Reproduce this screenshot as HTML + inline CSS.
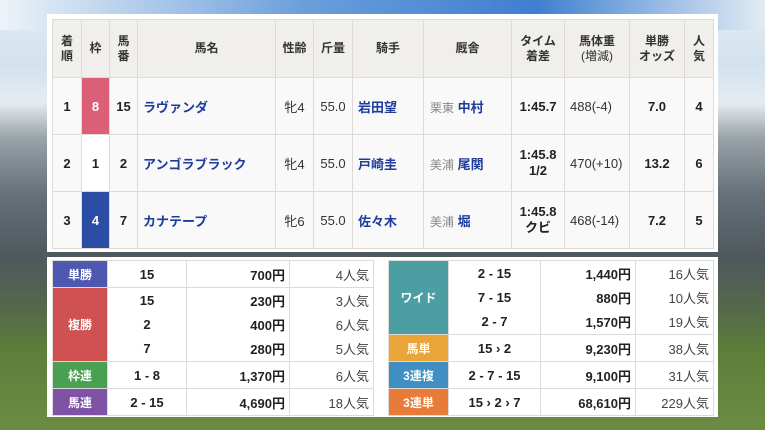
<!DOCTYPE html>
<html><head><meta charset="utf-8"><style>
*{margin:0;padding:0;box-sizing:border-box}
body{width:765px;height:430px;overflow:hidden;position:relative;font-family:"Liberation Sans","Noto Sans CJK JP",sans-serif;
background:linear-gradient(180deg,#e4edf4 0%,#d3e2ee 15%,#e4ecf1 24%,#9aa3a8 32%,#66717a 45%,#4e585d 60%,#55694a 72%,#5d7f3a 82%,#6c8c44 100%);}
.sky{position:absolute;left:0;top:0;width:765px;height:30px;background:linear-gradient(90deg,#edf3f8,#6a9edb 40%,#3f7fd0 70%,#e2ecf4)}
.panel{position:absolute;background:#fff}
table{border-collapse:collapse;position:absolute;table-layout:fixed}
td{border:1px solid #dedbd6;text-align:center;font-size:13px;color:#222;padding:0}
.h td{background:#f1efeb;font-weight:bold;font-size:12px;line-height:15px;color:#333}
.r td{background:#f9f9f9;font-weight:bold}
.b{color:#1d3c9c;font-weight:bold;text-align:left;padding-left:5px;font-size:13px}
.n{font-weight:normal!important;color:#333}
.g{color:#888;font-weight:normal;font-size:12px}
.p td{background:#fff;font-size:13px;font-weight:bold;color:#222}
.lab{color:#fff!important;font-size:12px!important}
.rt{text-align:right;padding-right:4px}
.pop{text-align:right;padding-right:4px;font-weight:normal!important;color:#444!important}
</style></head><body>
<div class="sky"></div>
<div class="panel" style="left:47px;top:14px;width:671px;height:238px"></div>
<table style="left:52px;top:19px;width:661px">
<colgroup><col style="width:29px"><col style="width:28px"><col style="width:28px"><col style="width:138px"><col style="width:38px"><col style="width:39px"><col style="width:71px"><col style="width:88px"><col style="width:53px"><col style="width:65px"><col style="width:55px"><col style="width:29px"></colgroup>
<tr class="h" style="height:58px"><td>着<br>順</td><td>枠</td><td>馬<br>番</td><td>馬名</td><td>性齢</td><td>斤量</td><td>騎手</td><td>厩舎</td><td>タイム<br>着差</td><td>馬体重<br><span style="font-weight:normal">(増減)</span></td><td>単勝<br>オッズ</td><td>人<br>気</td></tr>
<tr class="r" style="height:57px"><td>1</td><td style="background:#dc5f78;color:#fff">8</td><td>15</td><td class="b">ラヴァンダ</td><td class="n">牝4</td><td class="n">55.0</td><td class="b">岩田望</td><td style="text-align:left;padding-left:6px"><span class="g">栗東</span> <span style="color:#1d3c9c">中村</span></td><td>1:45.7</td><td class="n" style="text-align:left;padding-left:5px">488(-4)</td><td>7.0</td><td>4</td></tr>
<tr class="r" style="height:57px"><td>2</td><td style="background:#fff">1</td><td>2</td><td class="b">アンゴラブラック</td><td class="n">牝4</td><td class="n">55.0</td><td class="b">戸崎圭</td><td style="text-align:left;padding-left:6px"><span class="g">美浦</span> <span style="color:#1d3c9c">尾関</span></td><td style="line-height:16px">1:45.8<br>1/2</td><td class="n" style="text-align:left;padding-left:5px">470(+10)</td><td>13.2</td><td>6</td></tr>
<tr class="r" style="height:57px"><td>3</td><td style="background:#2b4ea4;color:#fff">4</td><td>7</td><td class="b">カナテープ</td><td class="n">牝6</td><td class="n">55.0</td><td class="b">佐々木</td><td style="text-align:left;padding-left:6px"><span class="g">美浦</span> <span style="color:#1d3c9c">堀</span></td><td style="line-height:16px">1:45.8<br>クビ</td><td class="n" style="text-align:left;padding-left:5px">468(-14)</td><td>7.2</td><td>5</td></tr>
</table>
<div class="panel" style="left:47px;top:257px;width:671px;height:160px"></div>
<table class="p" style="left:52px;top:260px;width:321px">
<colgroup><col style="width:55px"><col style="width:79px"><col style="width:103px"><col style="width:84px"></colgroup>
<tr style="height:27px"><td class="lab" style="background:#4f58b0">単勝</td><td>15</td><td class="rt">700円</td><td class="pop">4人気</td></tr>
<tr style="height:25px"><td class="lab" rowspan="3" style="background:#d05151">複勝</td><td style="border-bottom:none">15</td><td class="rt" style="border-bottom:none">230円</td><td class="pop" style="border-bottom:none">3人気</td></tr>
<tr style="height:24px"><td style="border:none">2</td><td class="rt" style="border-top:none;border-bottom:none">400円</td><td class="pop" style="border-top:none;border-bottom:none">6人気</td></tr>
<tr style="height:25px"><td style="border-top:none">7</td><td class="rt" style="border-top:none">280円</td><td class="pop" style="border-top:none">5人気</td></tr>
<tr style="height:27px"><td class="lab" style="background:#4aa052">枠連</td><td>1 - 8</td><td class="rt">1,370円</td><td class="pop">6人気</td></tr>
<tr style="height:27px"><td class="lab" style="background:#7f52a6">馬連</td><td>2 - 15</td><td class="rt">4,690円</td><td class="pop">18人気</td></tr>
</table>
<table class="p" style="left:388px;top:260px;width:325px">
<colgroup><col style="width:60px"><col style="width:92px"><col style="width:95px"><col style="width:78px"></colgroup>
<tr style="height:25px"><td class="lab" rowspan="3" style="background:#4b9fa2">ワイド</td><td style="border-bottom:none">2 - 15</td><td class="rt" style="border-bottom:none">1,440円</td><td class="pop" style="border-bottom:none">16人気</td></tr>
<tr style="height:24px"><td style="border-top:none;border-bottom:none">7 - 15</td><td class="rt" style="border-top:none;border-bottom:none">880円</td><td class="pop" style="border-top:none;border-bottom:none">10人気</td></tr>
<tr style="height:25px"><td style="border-top:none">2 - 7</td><td class="rt" style="border-top:none">1,570円</td><td class="pop" style="border-top:none">19人気</td></tr>
<tr style="height:27px"><td class="lab" style="background:#e9a43a">馬単</td><td>15 › 2</td><td class="rt">9,230円</td><td class="pop">38人気</td></tr>
<tr style="height:27px"><td class="lab" style="background:#3f8fc2">3連複</td><td>2 - 7 - 15</td><td class="rt">9,100円</td><td class="pop">31人気</td></tr>
<tr style="height:27px"><td class="lab" style="background:#e97b3a">3連単</td><td>15 › 2 › 7</td><td class="rt">68,610円</td><td class="pop">229人気</td></tr>
</table>
</body></html>
